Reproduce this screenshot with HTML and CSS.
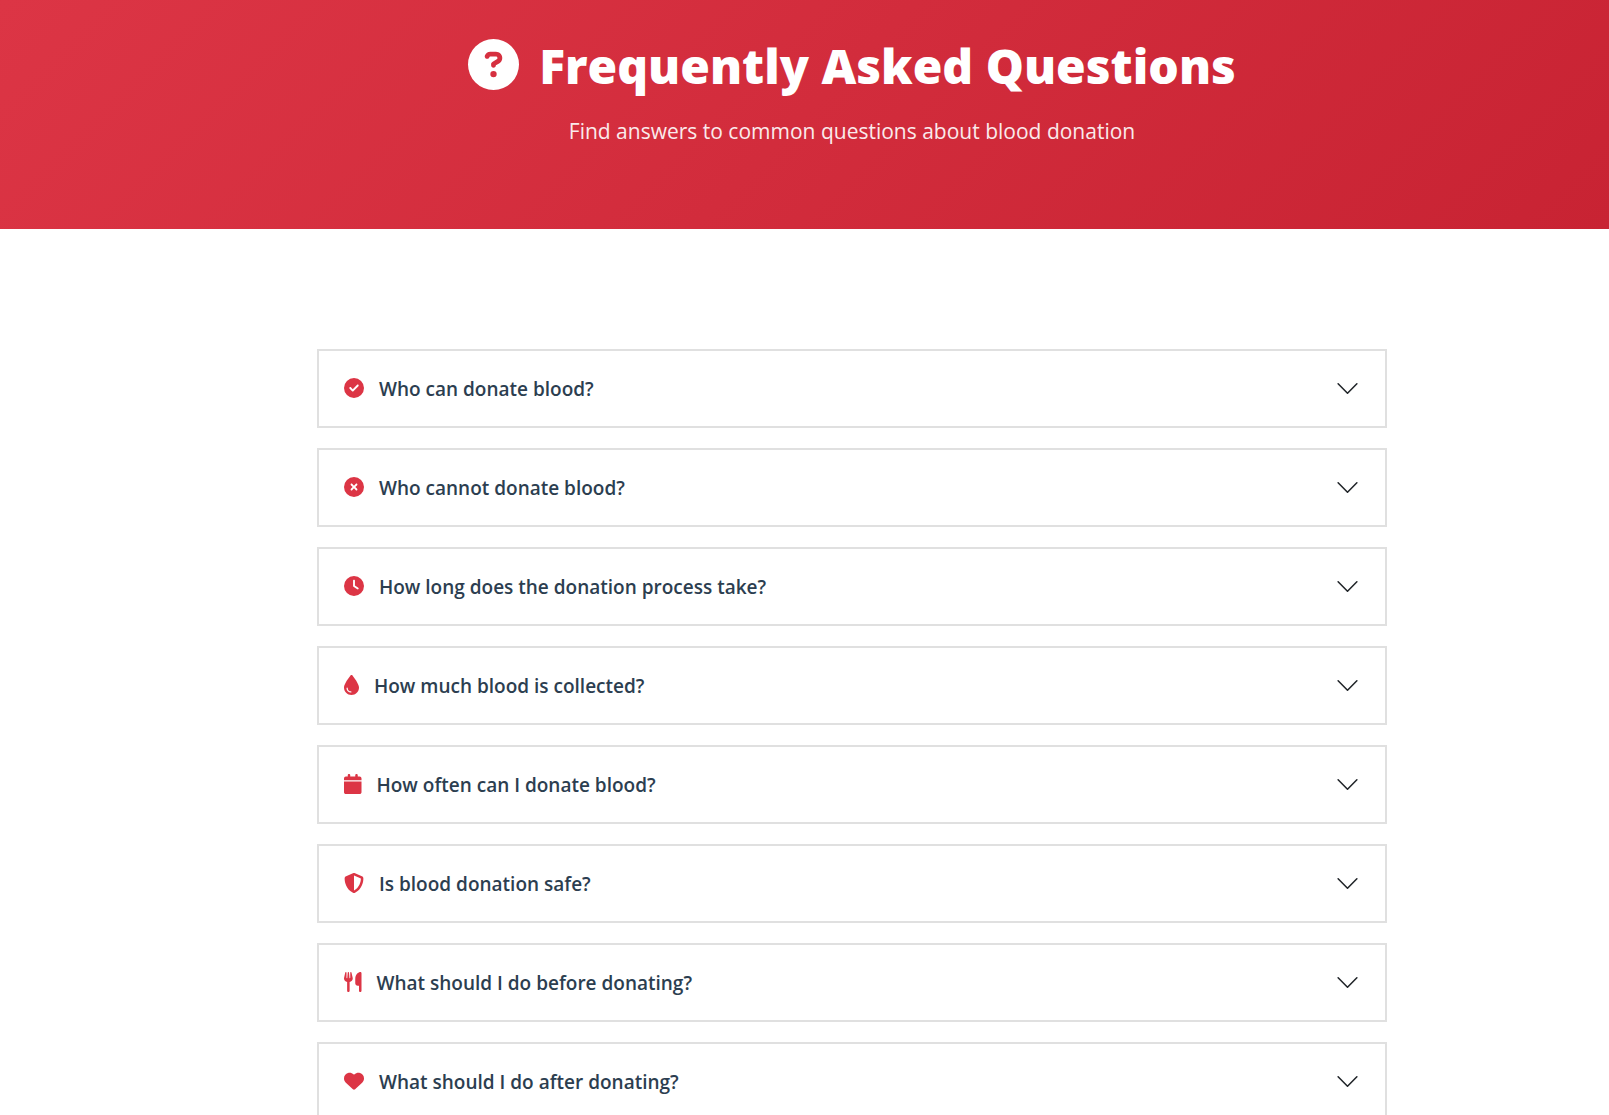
FILE: index.html
```
<!DOCTYPE html>
<html lang="en">
<head>
    <meta charset="UTF-8">
    <meta name="viewport" content="width=device-width, initial-scale=1.0">
    <title>Frequently Asked Questions</title>
    <link rel="stylesheet" href="styles.css">
</head>
<body>
    <header class="page-header">
        <h1>
            <svg class="header-icon" viewBox="0 0 512 512" aria-hidden="true"><path d="M256 512A256 256 0 1 0 256 0a256 256 0 1 0 0 512zM169.800 165.300c7.900-22.300 29.100-37.300 52.800-37.300h58.300c34.900 0 63.100 28.300 63.100 63.100c0 22.600-12.100 43.500-31.700 54.800L280 264.400c-.2 13-10.900 23.600-24 23.600c-13.300 0-24-10.700-24-24V250.500c0-8.600 4.600-16.500 12.100-20.800l44.300-25.400c4.700-2.700 7.600-7.700 7.600-13.100c0-8.400-6.800-15.100-15.100-15.100H222.600c-3.400 0-6.400 2.100-7.500 5.300l-.4 1.200c-4.400 12.500-18.200 19-30.600 14.600s-19-18.200-14.600-30.600l.4-1.200zM224 352a32 32 0 1 1 64 0 32 32 0 1 1 -64 0z"/></svg>
            Frequently Asked Questions
        </h1>
        <p>Find answers to common questions about blood donation</p>
    </header>

    <main class="faq-section">
        <div class="faq-list">
            <button class="faq-item" type="button" aria-expanded="false">
                <svg class="faq-icon" viewBox="0 0 512 512" aria-hidden="true"><path d="M256 512A256 256 0 1 0 256 0a256 256 0 1 0 0 512zM369 209L241 337c-9.400 9.400-24.600 9.400-33.900 0l-64-64c-9.400-9.400-9.400-24.600 0-33.900s24.600-9.400 33.900 0l47 47L335 175c9.400-9.400 24.600-9.400 33.900 0s9.400 24.600 0 33.900z"/></svg>
                <span class="faq-question">Who can donate blood?</span>
                <svg class="chevron" viewBox="0 0 16 16" aria-hidden="true"><path d="M2 5l6 6 6-6"/></svg>
            </button>

            <button class="faq-item" type="button" aria-expanded="false">
                <svg class="faq-icon" viewBox="0 0 512 512" aria-hidden="true"><path d="M256 512A256 256 0 1 0 256 0a256 256 0 1 0 0 512zM175 175c9.400-9.400 24.600-9.400 33.900 0l47 47 47-47c9.400-9.400 24.600-9.400 33.900 0s9.400 24.600 0 33.900l-47 47 47 47c9.400 9.400 9.400 24.600 0 33.900s-24.600 9.400-33.900 0l-47-47-47 47c-9.400 9.400-24.600 9.400-33.900 0s-9.400-24.600 0-33.900l47-47-47-47c-9.400-9.400-9.400-24.600 0-33.900z"/></svg>
                <span class="faq-question">Who cannot donate blood?</span>
                <svg class="chevron" viewBox="0 0 16 16" aria-hidden="true"><path d="M2 5l6 6 6-6"/></svg>
            </button>

            <button class="faq-item" type="button" aria-expanded="false">
                <svg class="faq-icon" viewBox="0 0 512 512" aria-hidden="true"><path fill-rule="evenodd" d="M256 0a256 256 0 1 1 0 512A256 256 0 1 1 256 0zM232 120V256c0 8 4 15.500 10.700 20l96 64c11 7.400 25.900 4.400 33.300-6.700s4.400-25.900-6.700-33.300L280 243.200V120c0-13.300-10.700-24-24-24s-24 10.700-24 24z"/></svg>
                <span class="faq-question">How long does the donation process take?</span>
                <svg class="chevron" viewBox="0 0 16 16" aria-hidden="true"><path d="M2 5l6 6 6-6"/></svg>
            </button>

            <button class="faq-item" type="button" aria-expanded="false">
                <svg class="faq-icon" viewBox="0 0 384 512" aria-hidden="true"><path fill-rule="evenodd" d="M192 512C86 512 0 426 0 320C0 228.800 130.200 57.700 166.600 11.700C172.600 4.200 181.500 0 191.100 0h1.800c9.600 0 18.500 4.200 24.500 11.700C253.800 57.700 384 228.800 384 320c0 106-86 192-192 192zM96 336c0-8.800-7.200-16-16-16s-16 7.200-16 16c0 61.900 50.100 112 112 112c8.800 0 16-7.200 16-16s-7.200-16-16-16c-44.200 0-80-35.800-80-80z"/></svg>
                <span class="faq-question">How much blood is collected?</span>
                <svg class="chevron" viewBox="0 0 16 16" aria-hidden="true"><path d="M2 5l6 6 6-6"/></svg>
            </button>

            <button class="faq-item" type="button" aria-expanded="false">
                <svg class="faq-icon" viewBox="0 0 448 512" aria-hidden="true"><path d="M96 32V64H48C21.500 64 0 85.500 0 112v48H448V112c0-26.500-21.500-48-48-48H352V32c0-17.700-14.300-32-32-32s-32 14.300-32 32V64H160V32c0-17.700-14.300-32-32-32S96 14.300 96 32zM448 192H0V464c0 26.500 21.500 48 48 48H400c26.500 0 48-21.500 48-48V192z"/></svg>
                <span class="faq-question">How often can I donate blood?</span>
                <svg class="chevron" viewBox="0 0 16 16" aria-hidden="true"><path d="M2 5l6 6 6-6"/></svg>
            </button>

            <button class="faq-item" type="button" aria-expanded="false">
                <svg class="faq-icon" viewBox="0 0 512 512" aria-hidden="true"><path fill-rule="evenodd" d="M256 0c4.600 0 9.200 1 13.400 2.900L457.700 82.800c22 9.300 38.400 31 38.300 57.200c-.5 99.200-41.300 280.700-213.600 363.200c-16.700 8-36.100 8-52.800 0C57.300 420.700 16.500 239.200 16 140c-.1-26.200 16.300-47.900 38.300-57.200L242.700 2.900C246.800 1 251.400 0 256 0zM256 66.800V444.800C394 378 431.100 230.100 432 141.400L256 66.800z"/></svg>
                <span class="faq-question">Is blood donation safe?</span>
                <svg class="chevron" viewBox="0 0 16 16" aria-hidden="true"><path d="M2 5l6 6 6-6"/></svg>
            </button>

            <button class="faq-item" type="button" aria-expanded="false">
                <svg class="faq-icon" viewBox="0 0 448 512" aria-hidden="true"><path d="M416 0C400 0 288 32 288 176V288c0 35.300 28.700 64 64 64h32V480c0 17.700 14.300 32 32 32s32-14.300 32-32V32c0-17.700-14.300-32-32-32zM64 16C64 7.800 57.900 1 49.700 .1S34.200 4.600 32.400 12.500L2.100 148.800C.7 155.100 0 161.500 0 167.900c0 45.900 35.100 83.600 80 87.700V480c0 17.700 14.300 32 32 32s32-14.300 32-32V255.600c44.900-4.100 80-41.800 80-87.700c0-6.400-.7-12.800-2.100-19.100L191.600 12.500c-1.800-8-9.300-13.300-17.400-12.400S160 7.800 160 16V150.200c0 5.400-4.400 9.800-9.800 9.800c-5.100 0-9.300-3.900-9.800-9L127.900 14.600C127.200 6.300 120.300 0 112 0s-15.200 6.300-15.900 14.600L83.700 151c-.5 5.100-4.700 9-9.800 9c-5.400 0-9.800-4.400-9.800-9.800V16z"/></svg>
                <span class="faq-question">What should I do before donating?</span>
                <svg class="chevron" viewBox="0 0 16 16" aria-hidden="true"><path d="M2 5l6 6 6-6"/></svg>
            </button>

            <button class="faq-item" type="button" aria-expanded="false">
                <svg class="faq-icon" viewBox="0 0 512 512" aria-hidden="true"><path d="M47.600 300.400L228.300 469.100c7.500 7 17.400 10.900 27.700 10.900s20.200-3.900 27.700-10.900L464.400 300.400c30.400-28.300 47.600-68 47.600-109.500v-5.800c0-69.900-50.500-129.500-119.400-141C347 36.500 300.600 51.400 268 84L256 96 244 84c-32.600-32.600-79-47.500-124.600-39.900C50.500 55.600 0 115.200 0 185.100v5.800c0 41.500 17.200 81.200 47.600 109.500z"/></svg>
                <span class="faq-question">What should I do after donating?</span>
                <svg class="chevron" viewBox="0 0 16 16" aria-hidden="true"><path d="M2 5l6 6 6-6"/></svg>
            </button>
        </div>
    </main>
</body>
</html>
```
FILE: styles.css
```
* {
    box-sizing: border-box;
}

body {
    margin: 0;
    font-family: 'Segoe UI', 'Open Sans', 'Noto Sans', sans-serif;
    color: #2c3e50;
    background: #fff;
}

.page-header {
    padding: 36px 0 78px 95px;
    background: linear-gradient(135deg, #dc3545 0%, #c82333 100%);
    color: #fff;
    text-align: center;
}

.page-header h1 {
    display: flex;
    align-items: center;
    justify-content: center;
    gap: 20px;
    margin: 0 0 16px;
    font-size: 48px;
    font-weight: 800;
    line-height: 60px;
}

.header-icon {
    height: 51px;
    margin-bottom: 4px;
    fill: currentColor;
}

.page-header p {
    margin: 0;
    font-size: 21px;
    line-height: 39px;
    opacity: 0.9;
}

.faq-section {
    padding: 120px 0 80px 95px;
}

.faq-list {
    display: flex;
    flex-direction: column;
    gap: 20px;
    max-width: 1070px;
    margin: 0 auto;
}

.faq-item {
    display: flex;
    align-items: center;
    width: 100%;
    padding: 25px;
    border: 2px solid #e0e0e0;
    background: #fff;
    color: #2c3e50;
    font-family: inherit;
    font-size: 19px;
    font-weight: 600;
    line-height: 23px;
    text-align: left;
    cursor: pointer;
}

.faq-icon {
    height: 20px;
    margin: 0 15px 2px 0;
    fill: #dc3545;
}

.faq-question {
    padding-top: 2px;
}

.chevron {
    width: 25px;
    height: 25px;
    margin-left: auto;
    fill: none;
    stroke: #212529;
    stroke-linecap: round;
    stroke-linejoin: round;
}
```
